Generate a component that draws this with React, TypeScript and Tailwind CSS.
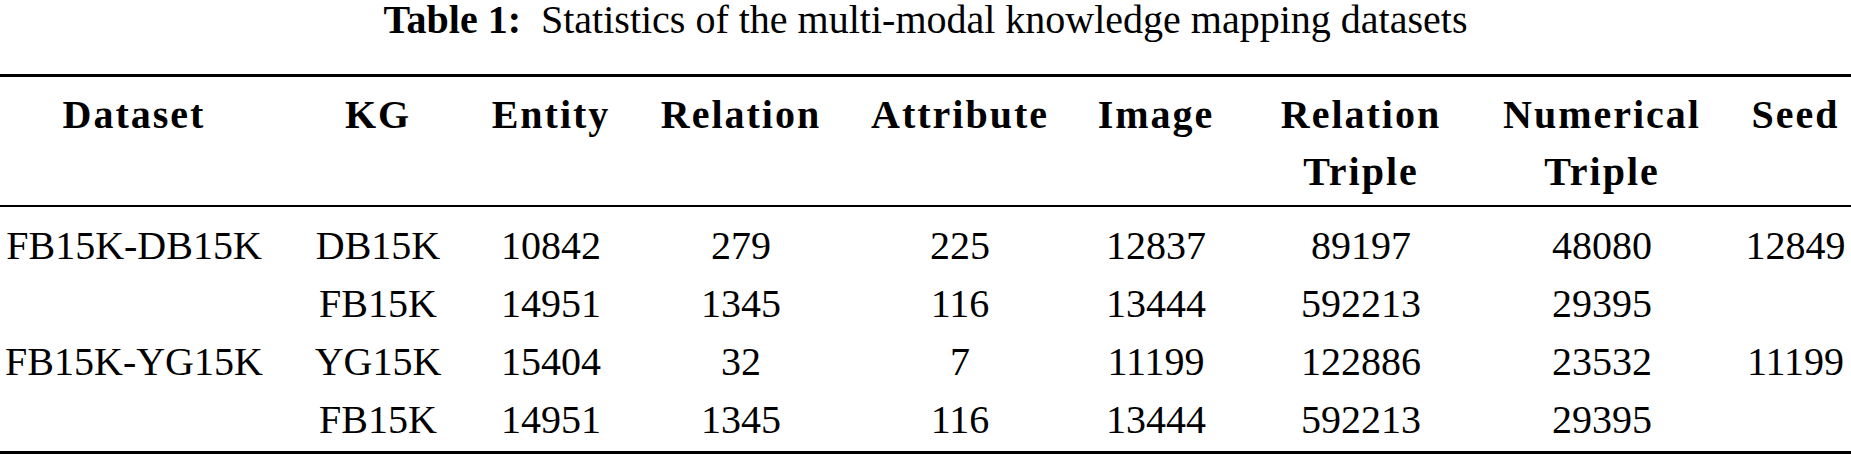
import React from 'react';

const headers = [
  ['Dataset'],
  ['KG'],
  ['Entity'],
  ['Relation'],
  ['Attribute'],
  ['Image'],
  ['Relation', 'Triple'],
  ['Numerical', 'Triple'],
  ['Seed'],
];

const rows = [
  ['FB15K-DB15K', 'DB15K', '10842', '279', '225', '12837', '89197', '48080', '12849'],
  ['', 'FB15K', '14951', '1345', '116', '13444', '592213', '29395', ''],
  ['FB15K-YG15K', 'YG15K', '15404', '32', '7', '11199', '122886', '23532', '11199'],
  ['', 'FB15K', '14951', '1345', '116', '13444', '592213', '29395', ''],
];

const colPad = ['', 'pl-[24px]', 'pr-[8px]', 'pr-[14px]', 'pl-[12px]', 'pr-[4px]', 'pr-[6px]', 'pr-[6px]', ''];

const gridCols = 'grid grid-cols-[268px_196px_182px_204px_208px_200px_212px_270px_111px]';

export default function App() {
  return (
    <div className="w-[1851px] h-[457px] bg-white text-black font-['Liberation_Serif',serif] text-[40px]">
      {/* Caption */}
      <p className="text-center leading-[40px] whitespace-pre">
        <span className="font-bold">Table 1:</span>
        {'  Statistics of the multi-modal knowledge mapping datasets'}
      </p>

      <div className="mt-[34px] border-y-[3px] border-black">
        {/* Header */}
        <div className={`${gridCols} pt-[9px] pb-[5px] border-b-2 border-black font-bold tracking-[2px] leading-[57px]`}>
          {headers.map((h, i) => (
            <div key={i} className={`text-center whitespace-nowrap ${colPad[i]}`}>
              {h.map((line) => (
                <div key={line}>{line}</div>
              ))}
            </div>
          ))}
        </div>

        {/* Body */}
        <div className={`${gridCols} pt-[10px] pb-[2px] leading-[58px]`}>
          {rows.map((row, r) =>
            row.map((cell, i) => (
              <div key={`${r}-${i}`} className={`text-center whitespace-nowrap ${colPad[i]}`}>
                {cell}
              </div>
            ))
          )}
        </div>
      </div>
    </div>
  );
}
